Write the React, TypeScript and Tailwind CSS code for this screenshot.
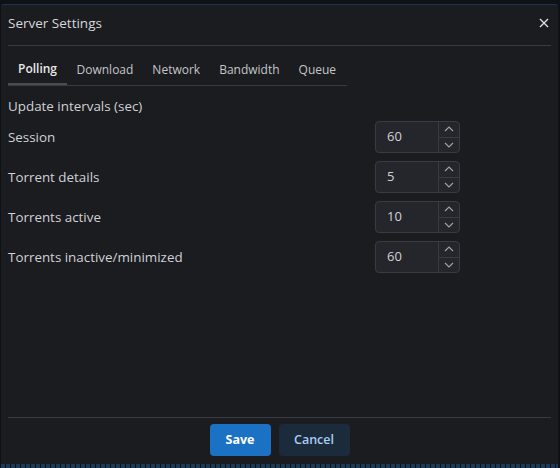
import React from "react";

const rows = [
  { label: "Session", value: "60" },
  { label: "Torrent details", value: "5" },
  { label: "Torrents active", value: "10" },
  { label: "Torrents inactive/minimized", value: "60" },
];

const tabs = ["Polling", "Download", "Network", "Bandwidth", "Queue"];

function Chevron({ up }: { up?: boolean }) {
  return (
    <svg width="10" height="6" viewBox="0 0 10 6" fill="none" stroke="#a0a1a6" strokeWidth="1.2">
      {up ? <path d="M1 5 L5 1 L9 5" /> : <path d="M1 1 L5 5 L9 1" />}
    </svg>
  );
}

function NumberInput({ value }: { value: string }) {
  return (
    <div className="flex h-[32px] w-[85px] rounded-[4px] border border-[#3a3b41] bg-[#25262b]">
      <div className="flex flex-1 items-center pl-[11px] text-[13px] text-[#d0d1d4]">{value}</div>
      <div className="flex w-[21px] flex-col border-l border-[#3a3b41]">
        <div className="flex flex-1 items-center justify-center border-b border-[#3a3b41]">
          <Chevron up />
        </div>
        <div className="flex flex-1 items-center justify-center">
          <Chevron />
        </div>
      </div>
    </div>
  );
}

export default function App() {
  return (
    <div
      className="h-[468px] w-[560px] bg-[#0e1116] pt-[4px] pl-[1px] pr-[2px]"
      style={{ fontFamily: '"Open Sans", "Noto Sans", sans-serif' }}
    >
      <div className="flex h-[460px] flex-col rounded-t-[3px] border-t border-[#1f3350] bg-[#1b1c20] px-[7px]">
        <div className="flex h-[40px] items-center justify-between pb-[4px]">
          <span className="text-[13.5px] text-[#d6d7da]">Server Settings</span>
          <svg width="10" height="10" viewBox="0 0 10 10" className="mr-[2px]" stroke="#e0e0e0" strokeWidth="1.4">
            <path d="M1 1 L9 9 M9 1 L1 9" />
          </svg>
        </div>
        <div className="h-px bg-[#3b3c41]" />
        <div className="mt-[8px] flex w-[339px] border-b border-[#3b3c41]">
          {tabs.map((t, i) => (
            <div
              key={t}
              className={
                i === 0
                  ? "-mb-px flex h-[31px] items-center border-b-2 border-[#4a4b50] px-[10px] text-[12px] font-semibold text-[#e8e8ea]"
                  : "flex h-[31px] items-center px-[9.5px] text-[12px] text-[#c4c5c8]"
              }
            >
              {t}
            </div>
          ))}
        </div>
        <div className="mt-[10px] text-[13.4px] text-[#d0d1d4]">Update intervals (sec)</div>
        <div className="mt-[5px] flex flex-col gap-[8px]">
          {rows.map((r) => (
            <div key={r.label} className="flex h-[32px] items-center">
              <span className="w-[367px] text-[13.4px] text-[#d0d1d4]">{r.label}</span>
              <NumberInput value={r.value} />
            </div>
          ))}
        </div>
        <div className="flex-1" />
        <div className="h-px bg-[#3b3c41]" />
        <div className="flex h-[46px] items-start justify-center gap-[8px] pt-[6px]">
          <button className="h-[32px] w-[61px] rounded-[4px] bg-[#1b72c4] text-[12.5px] font-bold text-white">
            Save
          </button>
          <button className="h-[32px] w-[71px] rounded-[4px] bg-[#1b2b3c] text-[12.5px] font-semibold text-[#a9cdf0]">
            Cancel
          </button>
        </div>
      </div>
      <div
        className="h-[4px] w-full"
        style={{ backgroundImage: "repeating-linear-gradient(90deg, #1c3a55 0 4px, #0e1116 4px 5px)" }}
      />
    </div>
  );
}
